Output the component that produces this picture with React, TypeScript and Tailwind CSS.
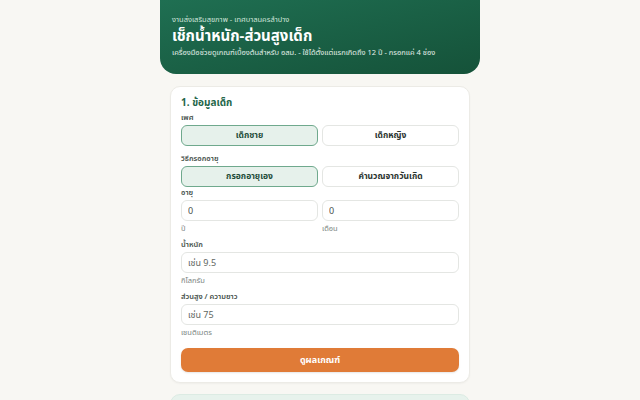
import React, { useState } from 'react';

const Label: React.FC<{ children: React.ReactNode }> = ({ children }) => (
  <div className="text-[7.5px] font-semibold text-[#45504a] leading-[10px] mb-[3px]">{children}</div>
);

const Hint: React.FC<{ children: React.ReactNode }> = ({ children }) => (
  <div className="text-[7.5px] text-[#7b857f] leading-[10px] mt-[2px]">{children}</div>
);

const Toggle: React.FC<{ active: boolean; label: string; onClick: () => void }> = ({ active, label, onClick }) => (
  <button
    onClick={onClick}
    className={
      active
        ? 'h-[21px] rounded-[6px] border border-[#6fa98d] bg-[#e6f1eb] text-[8.5px] font-bold text-[#1e4d39]'
        : 'h-[21px] rounded-[6px] border border-[#e4e6e3] bg-white text-[8.5px] font-bold text-[#2a332e]'
    }
  >
    {label}
  </button>
);

const inputCls =
  'block w-full h-[21px] rounded-[6px] border border-[#e4e6e3] bg-white px-[6px] text-[9px] text-[#4a524d] placeholder:text-[#5f6762] outline-none';

export default function App() {
  const [sex, setSex] = useState<'boy' | 'girl'>('boy');
  const [mode, setMode] = useState<'manual' | 'dob'>('manual');

  return (
    <div
      className="w-[640px] h-[400px] overflow-hidden bg-[#f8f7f3] flex flex-col items-center"
      style={{ fontFamily: '"Noto Sans", "Noto Sans Thai", Loma, sans-serif' }}
    >
      <header className="w-[320px] h-[74px] shrink-0 rounded-b-[16px] bg-gradient-to-br from-[#1f6f52] to-[#155239] px-[12px] pt-[14px] text-white">
        <div className="text-[7.5px] leading-[10px] text-[#cfe5da]">งานส่งเสริมสุขภาพ - เทศบาลนครลำปาง</div>
        <h1 className="text-[15px] font-bold leading-[20px] mt-[1px]">เช็กน้ำหนัก-ส่วนสูงเด็ก</h1>
        <p className="text-[7.5px] leading-[12px] text-[#e2efe8] mt-[1px]">
          เครื่องมือช่วยดูเกณฑ์เบื้องต้นสำหรับ อสม. - ใช้ได้ตั้งแต่แรกเกิดถึง 12 ปี - กรอกแค่ 4 ช่อง
        </p>
      </header>

      <main className="w-[300px] mt-[12px] flex flex-col gap-[11px]">
        <section className="rounded-[10px] border border-[#ecebe6] bg-white px-[10px] pt-[8px] pb-[10px] shadow-[0_1px_2px_rgba(0,0,0,0.04)]">
          <h2 className="text-[10px] font-bold text-[#236649] leading-[14px] mb-[3px]">1. ข้อมูลเด็ก</h2>

          <Label>เพศ</Label>
          <div className="grid grid-cols-2 gap-[4px]">
            <Toggle active={sex === 'boy'} label="เด็กชาย" onClick={() => setSex('boy')} />
            <Toggle active={sex === 'girl'} label="เด็กหญิง" onClick={() => setSex('girl')} />
          </div>

          <div className="mt-[7px]">
            <Label>วิธีกรอกอายุ</Label>
            <div className="grid grid-cols-2 gap-[4px]">
              <Toggle active={mode === 'manual'} label="กรอกอายุเอง" onClick={() => setMode('manual')} />
              <Toggle active={mode === 'dob'} label="คำนวณจากวันเกิด" onClick={() => setMode('dob')} />
            </div>
          </div>

          <div>
            <Label>อายุ</Label>
            <div className="grid grid-cols-2 gap-[4px]">
              <div>
                <input defaultValue="0" className={inputCls} />
                <Hint>ปี</Hint>
              </div>
              <div>
                <input defaultValue="0" className={inputCls} />
                <Hint>เดือน</Hint>
              </div>
            </div>
          </div>

          <div className="mt-[6px]">
            <Label>น้ำหนัก</Label>
            <input placeholder="เช่น 9.5" className={inputCls} />
            <Hint>กิโลกรัม</Hint>
          </div>

          <div className="mt-[6px]">
            <Label>ส่วนสูง / ความยาว</Label>
            <input placeholder="เช่น 75" className={inputCls} />
            <Hint>เซนติเมตร</Hint>
          </div>

          <button className="mt-[11px] w-full h-[24px] rounded-[7px] bg-[#e07b37] text-[9px] font-bold text-white shadow-[0_1px_2px_rgba(0,0,0,0.1)]">
            ดูผลเกณฑ์
          </button>
        </section>

        <section className="h-[40px] rounded-[10px] border border-[#dcebe3] bg-[#e7f2ec]" />
      </main>
    </div>
  );
}
